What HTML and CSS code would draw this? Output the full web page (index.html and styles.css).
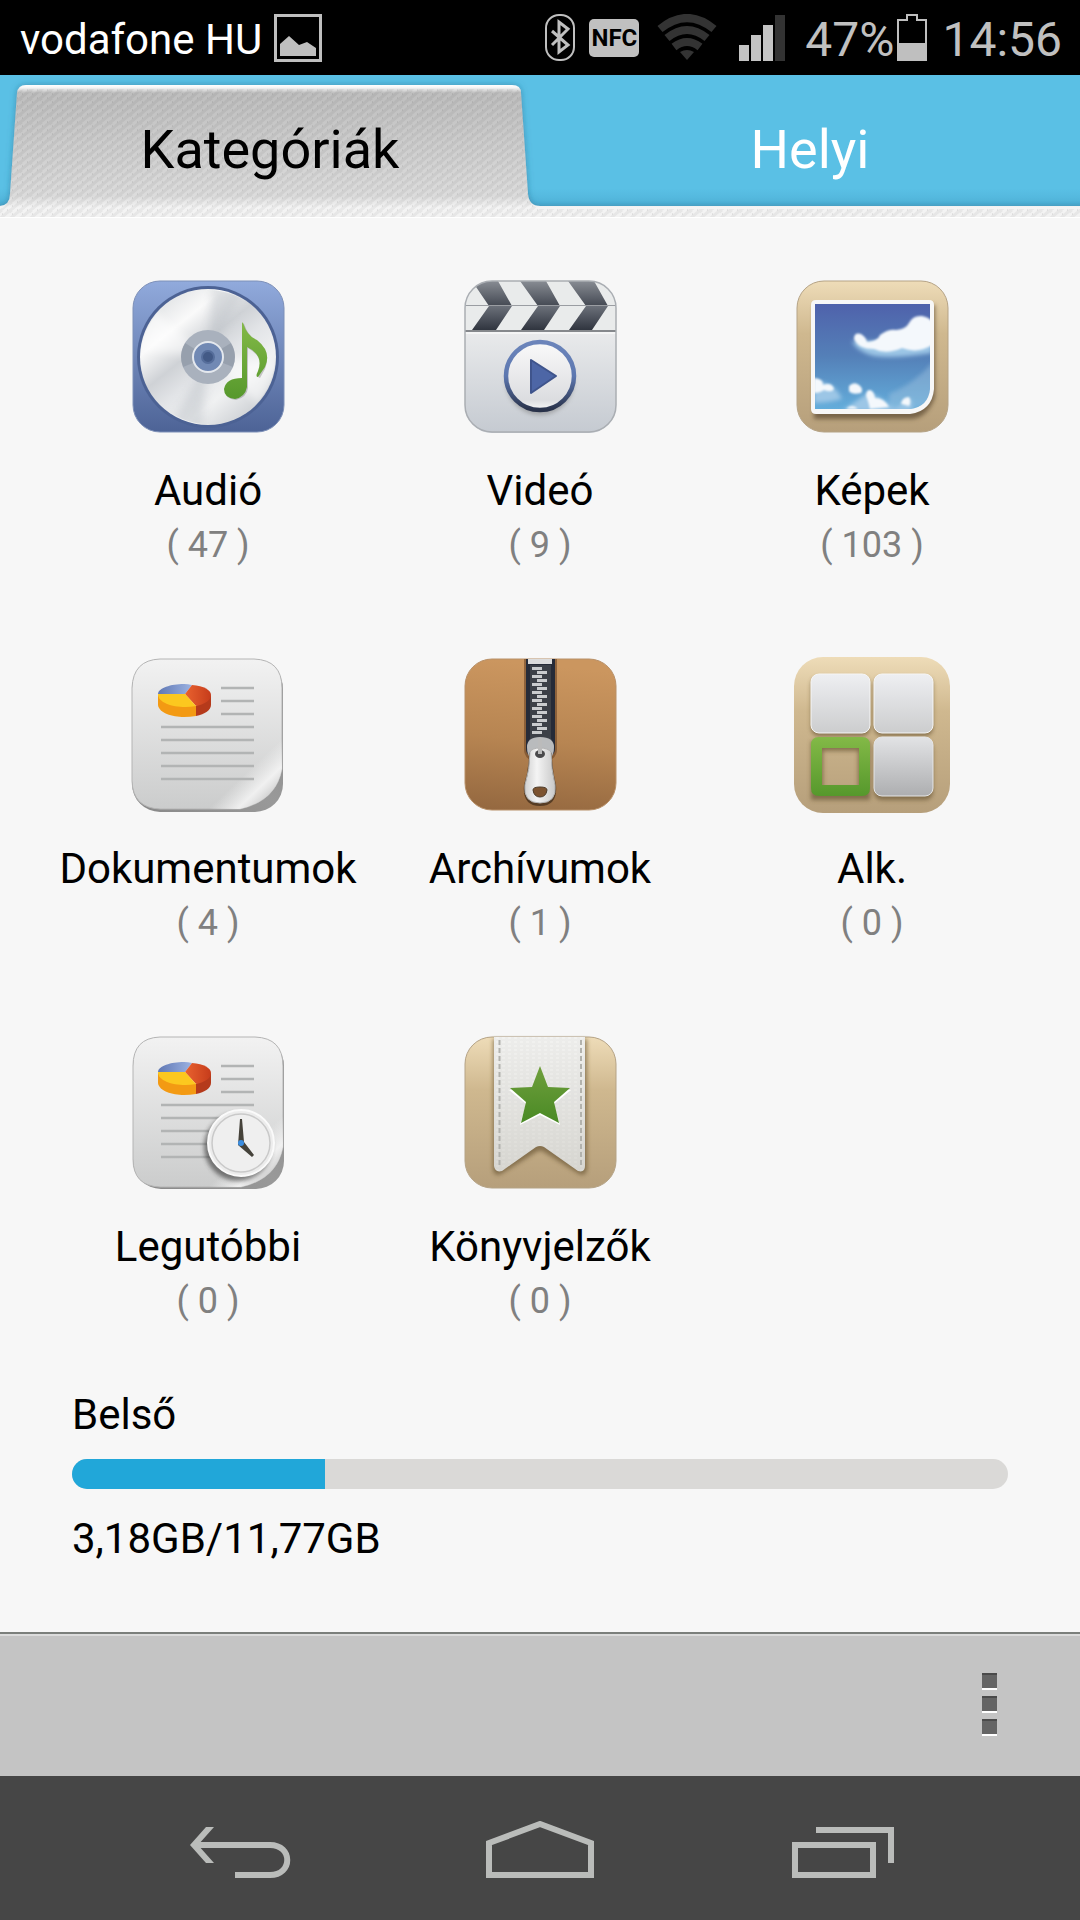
FILE: index.html
```
<!DOCTYPE html>
<html lang="hu">
<head>
    <meta charset="UTF-8">
    <meta name="viewport" content="width=device-width, initial-scale=1.0">
    <title>Kategóriák</title>
    <link rel="stylesheet" href="styles.css">
</head>
<body>
    <header class="status-bar">
        <span class="carrier">vodafone HU</span>
        <svg class="picture-icon" width="48" height="48" viewBox="0 0 48 48">
            <rect x="1.5" y="1.5" width="45" height="45" fill="none" stroke="#bfbfbf" stroke-width="3"/>
            <path d="M6 42V30L15 22 25 31 33 28 42 34V42Z" fill="#bfbfbf"/>
        </svg>
        <div class="status-icons">
            <svg width="30" height="48" viewBox="0 0 30 48">
                <rect x="1" y="1" width="28" height="45" rx="13" fill="none" stroke="#bfbfbf" stroke-width="2"/>
                <path d="M7 17L23 31 14 38V8L23 15 7 31" fill="none" stroke="#bfbfbf" stroke-width="3"/>
            </svg>
            <span class="nfc">NFC</span>
            <svg class="wifi" width="60" height="48" viewBox="0 0 60 48">
                <g fill="none" stroke="#333" stroke-width="8">
                    <path d="M3 15Q30-7 57 15"/>
                    <path d="M10 24Q30 8 50 24"/>
                    <path d="M17 33Q30 23 43 33"/>
                </g>
                <path d="M23 38Q30 34 37 38L30 46Z" fill="#333"/>
            </svg>
            <svg class="signal" width="46" height="48" viewBox="0 0 46 48">
                <path d="M0 31h10v16H0zM12 21h10v26H12zM24 11h10v36H24z" fill="#c4c4c4"/>
                <path d="M36 1h10v46H36z" fill="#333"/>
            </svg>
            <span class="percent">47%</span>
            <svg width="30" height="48" viewBox="0 0 30 48">
                <path d="M1 46V6H10V1H20V6H29V46Z" fill="none" stroke="#bfbfbf" stroke-width="2"/>
                <path d="M0 29H30V47H0Z" fill="#bfbfbf"/>
            </svg>
            <span class="clock">14:56</span>
        </div>
    </header>

    <nav class="tabs">
        <svg class="tabs-bg" viewBox="0 0 1080 142" preserveAspectRatio="none">
            <defs>
                <linearGradient id="blue" x1="0" y1="0" x2="0" y2="1">
                    <stop offset="0.8" stop-color="#5ac0e5"/>
                    <stop offset="0.92" stop-color="#4fb2d8"/>
                </linearGradient>
                <linearGradient id="tab" gradientUnits="userSpaceOnUse" x1="0" y1="10" x2="0" y2="142">
                    <stop offset="0" stop-color="#fff"/>
                    <stop offset="0.02" stop-color="#f4f4f4"/>
                    <stop offset="0.06" stop-color="#bebebe"/>
                    <stop offset="0.84" stop-color="#dcdcdc"/>
                    <stop offset="0.93" stop-color="#f4f4f4"/>
                    <stop offset="1" stop-color="#f2f2f2"/>
                </linearGradient>
                <pattern id="weave" width="10" height="8" patternUnits="userSpaceOnUse">
                    <path d="M-3 10L13-3M-3 3L3-2M7 10L13 5" stroke="#000" stroke-opacity="0.05" stroke-width="3"/>
                    <path d="M2 2h1v2h-1zM7 6h1v2h-1z" fill="#000" fill-opacity="0.07"/>
                </pattern>
                <filter id="tab-shadow" x="-5%" y="-10%" width="110%" height="120%">
                    <feDropShadow dx="0" dy="0" stdDeviation="3" flood-color="#1a5f80" flood-opacity="0.5"/>
                </filter>
            </defs>
            <rect width="1080" height="142" fill="url(#blue)"/>
            <path d="M-20 131H0Q10 130 10 119L17 18Q18 10 26 10H512Q521 10 521 18L528 119Q529 131 540 131H1100V160H-20Z" fill="url(#tab)" filter="url(#tab-shadow)"/>
            <path d="M0 134Q10 130 10 119L17 20Q18 14 26 14H512Q521 14 521 20L528 119Q529 131 540 134H1080V142H0Z" fill="url(#weave)"/>
        </svg>
        <button class="tab active">Kategóriák</button>
        <button class="tab">Helyi</button>
    </nav>

    <main>
        <div class="categories">
            <a href="#" class="category">
                <svg class="icon" viewBox="0 0 156 156">
                    <defs>
                        <linearGradient id="audio-bg" x1="0" y1="0" x2="0" y2="1">
                            <stop offset="0" stop-color="#91aadc"/>
                            <stop offset="1" stop-color="#4d6396"/>
                        </linearGradient>
                        <linearGradient id="disc" x1="0.1" y1="0" x2="0.9" y2="1">
                            <stop offset="0" stop-color="#d6d9dc"/>
                            <stop offset="0.25" stop-color="#fafafa"/>
                            <stop offset="0.42" stop-color="#cfd2d6"/>
                            <stop offset="0.55" stop-color="#e2e4e7"/>
                            <stop offset="0.72" stop-color="#f0f1f2"/>
                            <stop offset="1" stop-color="#bfc3c8"/>
                        </linearGradient>
                        <linearGradient id="green" x1="0" y1="0" x2="0" y2="1">
                            <stop offset="0" stop-color="#83b947"/>
                            <stop offset="1" stop-color="#56982c"/>
                        </linearGradient>
                        <filter id="soft"><feGaussianBlur stdDeviation="2"/></filter>
                        <filter id="sheen" x="-20%" y="-20%" width="140%" height="140%"><feGaussianBlur stdDeviation="4"/></filter>
                        <clipPath id="disc-clip"><circle cx="78" cy="78" r="67"/></clipPath>
                    </defs>
                    <rect x="3" y="2" width="151" height="151" rx="27" fill="url(#audio-bg)" stroke="#7d90b8"/>
                    <circle cx="78" cy="78" r="71" fill="#4c6294"/>
                    <circle cx="78" cy="78" r="68" fill="url(#disc)"/>
                    <g clip-path="url(#disc-clip)">
                        <path d="M78 78L5 70 20 28ZM78 78L150 82 130 126Z" fill="#fff" opacity="0.5" filter="url(#sheen)"/>
                        <path d="M78 78L82 5 114 12ZM78 78L72 150 42 144Z" fill="#b4b9c0" opacity="0.4" filter="url(#sheen)"/>
                    </g>
                    <circle cx="78" cy="78" r="27" fill="#a9b1bd"/>
                    <path d="M78 78L55 64A27 27 0 0 0 53 88ZM78 78L101 64A27 27 0 0 1 103 88Z" fill="#7e8896" opacity="0.4"/>
                    <circle cx="78" cy="78" r="15" fill="#7189b4" stroke="#e4e8ee" stroke-width="2"/>
                    <circle cx="78" cy="78" r="6" fill="#435a86" stroke="#566e9b" stroke-width="2"/>
                    <path d="M114 45Q119 59 129 64Q141 75 135 90L130 99Q127 99 129 94Q136 80 118 69V109Q117 118 106 121Q94 120 95 110Q97 100 112 101V46Q112 43 114 45Z" fill="#333" opacity="0.25"/>
                    <path d="M113 44Q117 57 127 61Q142 73 135 88L128 98Q125 98 128 92Q134 76 117 68V108Q115 118 105 120Q94 119 94 110Q96 99 112 99V46Q112 42 113 44Z" fill="url(#green)"/>
                </svg>
                <span class="label">Audió</span>
                <span class="count">( 47 )</span>
            </a>
            <a href="#" class="category">
                <svg class="icon" viewBox="0 0 156 156">
                    <defs>
                        <linearGradient id="video-bg" x1="0" y1="0" x2="0" y2="1">
                            <stop offset="0.3" stop-color="#ebeced"/>
                            <stop offset="1" stop-color="#c5cad1"/>
                        </linearGradient>
                        <linearGradient id="stripe-a" x1="0" y1="0" x2="0" y2="1">
                            <stop offset="0" stop-color="#888c93"/>
                            <stop offset="1" stop-color="#444953"/>
                        </linearGradient>
                        <linearGradient id="stripe-b" x1="0" y1="0" x2="0" y2="1">
                            <stop offset="0" stop-color="#6c717a"/>
                            <stop offset="1" stop-color="#30353f"/>
                        </linearGradient>
                        <linearGradient id="play-ring" x1="0" y1="0" x2="0" y2="1">
                            <stop offset="0" stop-color="#6c85bb"/>
                            <stop offset="0.5" stop-color="#5c77b0"/>
                            <stop offset="1" stop-color="#29324a"/>
                        </linearGradient>
                        <linearGradient id="play-face" x1="0" y1="0" x2="0" y2="1">
                            <stop offset="0" stop-color="#fafafa"/>
                            <stop offset="0.85" stop-color="#dcdde0"/>
                            <stop offset="1" stop-color="#f8f8f8"/>
                        </linearGradient>
                        <clipPath id="video-clip"><rect x="3" y="2" width="151" height="151" rx="27"/></clipPath>
                    </defs>
                    <rect x="3" y="2" width="151" height="152" rx="27" fill="url(#video-bg)"/>
                    <g clip-path="url(#video-clip)">
                        <path d="M3 2H154V51H3Z" fill="#e9ebeb"/>
                        <path d="M10 2H36L50 27H27ZM58 2H84L98 27H76ZM106 2H132L146 27H124Z" fill="url(#stripe-a)"/>
                        <path d="M27 27H50L34 51H10ZM76 27H98L82 51H59ZM124 27H146L130 51H107Z" fill="url(#stripe-b)"/>
                        <path d="M3 26.500H154" stroke="#9a9da2" stroke-width="1"/>
                        <path d="M3 52H154" stroke="#85888c" stroke-width="2"/>
                        <path d="M3 54H154" stroke="#fff" stroke-width="1"/>
                    </g>
                    <rect x="3" y="2" width="151" height="151" rx="27" fill="none" stroke="#aaaeb3" stroke-width="1.500"/>
                    <circle cx="78" cy="102" r="34" fill="#777" opacity="0.5" filter="url(#soft)"/>
                    <circle cx="78" cy="97" r="34" fill="url(#play-face)" stroke="url(#play-ring)" stroke-width="4.500"/>
                    <path d="M69 81L94 97 69 114Z" fill="#4d66a6" stroke="#3f548c" stroke-width="2" stroke-linejoin="round"/>
                </svg>
                <span class="label">Videó</span>
                <span class="count">( 9 )</span>
            </a>
            <a href="#" class="category">
                <svg class="icon" viewBox="0 0 156 156">
                    <defs>
                        <linearGradient id="wood" x1="0" y1="0" x2="0" y2="1">
                            <stop offset="0" stop-color="#eedcb8"/>
                            <stop offset="0.35" stop-color="#cfb88f"/>
                            <stop offset="1" stop-color="#b69f7b"/>
                        </linearGradient>
                        <linearGradient id="sky" x1="0" y1="0" x2="0" y2="1">
                            <stop offset="0" stop-color="#4f62ab"/>
                            <stop offset="0.5" stop-color="#5480b8"/>
                            <stop offset="1" stop-color="#63addb"/>
                        </linearGradient>
                        <clipPath id="photo-clip"><path d="M21 25H136V110Q134 128 116 130H21Z"/></clipPath>
                        <filter id="cloud" x="-20%" y="-20%" width="140%" height="140%"><feGaussianBlur stdDeviation="2"/></filter>
                        <filter id="puff" x="-20%" y="-20%" width="140%" height="140%"><feGaussianBlur stdDeviation="1"/></filter>
                    </defs>
                    <rect x="3" y="2" width="151" height="151" rx="27" fill="url(#wood)" stroke="#b5a386"/>
                    <path d="M20 26H141V118Q134 138 118 140H20Z" fill="#5b4a30" opacity="0.7" filter="url(#soft)"/>
                    <path d="M22 21H135Q140 21 140 26V110Q138 132 116 135H22Q17 135 17 130V26Q17 21 22 21Z" fill="#f7f7f7"/>
                    <path d="M21 25H136V110Q134 128 116 130H21Z" fill="url(#sky)"/>
                    <g clip-path="url(#photo-clip)">
                        <path d="M95 115Q120 105 140 82V125L95 135Z" fill="#a9c7e2" opacity="0.4" filter="url(#soft)"/>
                        <g fill="#9cc6e6" filter="url(#cloud)">
                            <path d="M58 62Q62 72 80 77Q100 80 138 74V62H60Z"/>
                            <path d="M20 103Q40 102 48 120Q34 124 20 124Z"/>
                            <path d="M48 132Q62 122 74 114Q92 120 100 130L118 120 118 132Z"/>
                        </g>
                        <g fill="#f4f8fc" filter="url(#puff)">
                            <path d="M60 60Q60 53 67 55Q72 58 73 63Q84 62 86 56Q94 50 102 51Q112 50 115 44Q119 36 128 37Q134 38 138 42V66Q124 75 108 69Q92 76 80 70Q64 70 60 60Z"/>
                            <path d="M20 99Q30 100 29 106Q38 103 40 110Q38 114 30 111Q26 114 20 114Z"/>
                            <path d="M55 107Q60 102 65 106Q70 110 67 114Q58 116 55 112Z"/>
                            <path d="M75 111Q80 111 81 119Q90 119 95 128L76 130Q74 121 72 117Q72 112 75 111Z"/>
                            <path d="M107 125Q108 118 115 118Q118 122 115 127ZM52 130Q58 124 64 130Z"/>
                        </g>
                    </g>
                </svg>
                <span class="label">Képek</span>
                <span class="count">( 103 )</span>
            </a>

            <a href="#" class="category">
                <svg class="icon" viewBox="0 0 156 156">
                    <defs>
                        <linearGradient id="paper" x1="0" y1="0" x2="0" y2="1">
                            <stop offset="0" stop-color="#f2f2f2"/>
                            <stop offset="1" stop-color="#cbcccc"/>
                        </linearGradient>
                        <linearGradient id="curl" gradientUnits="userSpaceOnUse" x1="118" y1="114" x2="141" y2="138">
                            <stop offset="0" stop-color="#f4f4f4" stop-opacity="0"/>
                            <stop offset="0.6" stop-color="#f8f8f8" stop-opacity="0.8"/>
                            <stop offset="1" stop-color="#d0d0d0"/>
                        </linearGradient>
                        <linearGradient id="under" x1="0" y1="1" x2="1" y2="0">
                            <stop offset="0" stop-color="#888"/>
                            <stop offset="0.5" stop-color="#999"/>
                            <stop offset="1" stop-color="#888"/>
                        </linearGradient>
                        <linearGradient id="pie-blue"><stop offset="0" stop-color="#6078b4"/><stop offset="1" stop-color="#9bb2e2"/></linearGradient>
                        <linearGradient id="pie-red"><stop offset="0" stop-color="#e9622f"/><stop offset="1" stop-color="#c63c1b"/></linearGradient>
                        <g id="report">
                            <path d="M28 38V48C29 56 42 60 54 60Q60 60 66 59V49Z" fill="#f39a13"/>
                            <path d="M66 49V59C75 57 81 53 81 48V38Z" fill="#b53a1b"/>
                            <path d="M55 37H28C28 31 41 27 54 27Q58 27 62 28Z" fill="url(#pie-blue)"/>
                            <path d="M55 37L62 28C74 29 81 33 81 38C81 43 75 47 66 49Z" fill="url(#pie-red)"/>
                            <path d="M55 37L66 49C50 52 28 48 28 37Z" fill="#fcc81f"/>
                            <path d="M91 31H124M91 44H124M91 57H124M31 70H124M31 83H124M31 96H124M31 109H124M31 122H124" stroke="#b2b4b4" stroke-width="2.500"/>
                        </g>
                    </defs>
                    <rect x="2" y="4" width="151" height="151" rx="28" fill="url(#under)"/>
                    <path d="M30 2H124Q152 3 152 31V112Q146 144 110 152H30Q3 151 2 124V31Q3 3 30 2Z" fill="url(#paper)" stroke="#b4b4b4"/>
                    <path d="M152 80V112Q146 144 110 152H80V80Z" fill="url(#curl)"/>
                    <use href="#report"/>
                </svg>
                <span class="label">Dokumentumok</span>
                <span class="count">( 4 )</span>
            </a>
            <a href="#" class="category">
                <svg class="icon" viewBox="0 0 156 156">
                    <defs>
                        <linearGradient id="leather" x1="0.100" y1="0" x2="0" y2="1">
                            <stop offset="0" stop-color="#cb965f"/>
                            <stop offset="0.5" stop-color="#b78552"/>
                            <stop offset="1" stop-color="#93673f"/>
                        </linearGradient>
                        <linearGradient id="metal">
                            <stop offset="0" stop-color="#d0d0d0"/>
                            <stop offset="0.4" stop-color="#f4f4f4"/>
                            <stop offset="1" stop-color="#c8c8c8"/>
                        </linearGradient>
                        <pattern id="teeth" x="70" y="10" width="16" height="8" patternUnits="userSpaceOnUse">
                            <path d="M0 0h10v3h-10zM5 4h10v3h-10z" fill="#c9cbcd"/>
                        </pattern>
                    </defs>
                    <rect x="3" y="2" width="151" height="151" rx="27" fill="url(#leather)" stroke="#b89068"/>
                    <path d="M62 2H95V92Q95 104 78 106Q62 104 62 92Z" fill="#6b4527" opacity="0.6"/>
                    <path d="M64 2H93V92Q93 100 78 102Q64 100 64 92Z" fill="#262b38"/>
                    <path d="M68 8H89V82H68Z" fill="#3c4047"/>
                    <path d="M66 2H90V7H66Z" fill="#dcdcdc"/>
                    <path d="M70 10H86V78H70Z" fill="url(#teeth)"/>
                    <path d="M65 90Q65 80 78 80Q92 80 92 90Q92 98 88 102H69Q65 98 65 90Z" fill="#b9bbbd"/>
                    <path d="M67 96Q78 88 90 96Q90 112 94 128Q96 149 78 149Q60 149 62 128Q67 112 67 96Z" fill="#3a2817" opacity="0.7"/>
                    <path d="M68 95Q70 91 78 91Q86 91 89 95Q89 112 93 128Q95 146 78 146Q61 146 63 128Q68 112 68 95Z" fill="url(#metal)" stroke="#b4b4b4"/>
                    <ellipse cx="78" cy="97" rx="5" ry="4" fill="#4a4a4c"/>
                    <path d="M78 81V97" stroke="#bbb" stroke-width="4"/>
                    <path d="M71 133Q71 130 78 130Q85 130 85 133Q84 140 78 140Q72 140 71 133Z" fill="#7c5330" stroke="#4c3a28" stroke-width="1"/>
                </svg>
                <span class="label">Archívumok</span>
                <span class="count">( 1 )</span>
            </a>
            <a href="#" class="category">
                <svg class="icon" viewBox="0 0 156 156">
                    <defs>
                        <linearGradient id="tile" x1="0" y1="0" x2="0" y2="1">
                            <stop offset="0" stop-color="#eeeff2"/>
                            <stop offset="1" stop-color="#cccdce"/>
                        </linearGradient>
                        <linearGradient id="tile-dark" x1="0" y1="0" x2="0" y2="1">
                            <stop offset="0" stop-color="#e2e3e5"/>
                            <stop offset="1" stop-color="#adaeb0"/>
                        </linearGradient>
                    </defs>
                    <rect x="0" y="0" width="156" height="156" rx="29" fill="url(#wood)"/>
                    <g fill="#6b5636" opacity="0.7" filter="url(#soft)">
                        <rect x="17" y="20" width="59" height="59" rx="8"/>
                        <rect x="80" y="20" width="59" height="59" rx="8"/>
                        <path d="M17 84H76V143H17ZM29 94V132H64V94Z" fill-rule="evenodd"/>
                        <rect x="80" y="84" width="59" height="59" rx="8"/>
                    </g>
                    <rect x="17" y="17" width="59" height="59" rx="8" fill="url(#tile)" stroke="#f6f6f6"/>
                    <rect x="80" y="17" width="59" height="59" rx="8" fill="url(#tile)" stroke="#f6f6f6"/>
                    <rect x="80" y="80" width="59" height="59" rx="8" fill="url(#tile-dark)" stroke="#e6e6e6"/>
                    <path d="M25 80H68Q76 80 76 88V131Q76 139 68 139H25Q17 139 17 131V88Q17 80 25 80ZM28 91V128H65V91Z" fill="url(#green)" fill-rule="evenodd"/>
                </svg>
                <span class="label">Alk.</span>
                <span class="count">( 0 )</span>
            </a>

            <a href="#" class="category">
                <svg class="icon" viewBox="0 0 156 156">
                    <rect x="3" y="3" width="151" height="151" rx="28" fill="url(#under)"/>
                    <path d="M30 2H125Q153 3 153 31V112Q147 144 111 152H30Q3 151 3 124V31Q3 3 30 2Z" fill="url(#paper)" stroke="#b4b4b4"/>
                    <path d="M153 80V112Q147 144 111 152H80V80Z" fill="url(#curl)"/>
                    <use href="#report"/>
                    <circle cx="108" cy="112" r="34" fill="#333" opacity="0.6" filter="url(#soft)"/>
                    <circle cx="111" cy="108" r="33" fill="#ececec" stroke="#fafafa" stroke-width="2"/>
                    <circle cx="111" cy="108" r="29" fill="#efefef" stroke="#c9c9c9" stroke-width="1.500"/>
                    <path d="M110 84H112L114 107L124 120 122 122 108 110Z" fill="#45423a"/>
                    <circle cx="111" cy="108" r="3" fill="#3b8de0"/>
                </svg>
                <span class="label">Legutóbbi</span>
                <span class="count">( 0 )</span>
            </a>
            <a href="#" class="category">
                <svg class="icon" viewBox="0 0 156 156">
                    <defs>
                        <linearGradient id="ribbon" x1="0" y1="0" x2="0" y2="1">
                            <stop offset="0" stop-color="#f2f2f0"/>
                            <stop offset="1" stop-color="#dad9d4"/>
                        </linearGradient>
                        <pattern id="linen" width="6" height="4" patternUnits="userSpaceOnUse">
                            <path d="M0 1H6M1 3H4" stroke="#000" stroke-opacity="0.04"/>
                        </pattern>
                        <linearGradient id="star" x1="0" y1="0" x2="0" y2="1">
                            <stop offset="0" stop-color="#6f9f3c"/>
                            <stop offset="1" stop-color="#4a8a25"/>
                        </linearGradient>
                    </defs>
                    <rect x="3" y="2" width="151" height="151" rx="27" fill="url(#wood)" stroke="#b5a386"/>
                    <path d="M31 4H125V134Q124 142 117 139L80 116H76L39 139Q32 142 31 134Z" fill="#5f4c2c" opacity="0.6" filter="url(#soft)"/>
                    <path d="M32 2H123V131Q123 138 116 136L82 112Q78 110 74 112L40 136Q33 138 32 131Z" fill="url(#ribbon)"/>
                    <path d="M32 2H123V131Q123 138 116 136L82 112Q78 110 74 112L40 136Q33 138 32 131Z" fill="url(#linen)"/>
                    <path d="M37.500 5V130M119 5V130" stroke="#b2b2ad" stroke-width="2" stroke-dasharray="5 3"/>
                    <path d="M78 33L86 54 109 55 92 69 98 90 78 80 58 90 64 69 47 55 70 54Z" fill="#fff"/>
                    <path d="M78 31L86 52 108 53 92 67 97 88 78 78 59 88 64 67 48 53 70 52Z" fill="url(#star)"/>
                </svg>
                <span class="label">Könyvjelzők</span>
                <span class="count">( 0 )</span>
            </a>
        </div>

        <section class="storage">
            <label for="internal">Belső</label>
            <progress id="internal" value="3.18" max="11.77"></progress>
            <span>3,18GB/11,77GB</span>
        </section>
    </main>

    <div class="toolbar">
        <button class="menu" aria-label="Menü"><i></i><i></i><i></i></button>
    </div>

    <footer class="nav-bar">
        <button aria-label="Vissza">
            <svg width="110" height="60" viewBox="0 0 110 60">
                <path d="M30 6H22L6 24 22 42H30L14 24Z" fill="#babcba"/>
                <path d="M14 24H86C109 24 109 54 86 54H51" fill="none" stroke="#babcba" stroke-width="6"/>
            </svg>
        </button>
        <button aria-label="Kezdőlap">
            <svg width="110" height="60" viewBox="0 0 110 60">
                <path d="M4 54V22L55 3 106 22V54Z" fill="none" stroke="#babcba" stroke-width="6"/>
            </svg>
        </button>
        <button aria-label="Legutóbbi alkalmazások">
            <svg width="110" height="60" viewBox="0 0 110 60">
                <path d="M9 24H87V54H9ZM30 9H105V42" fill="none" stroke="#babcba" stroke-width="6"/>
            </svg>
        </button>
    </footer>
</body>
</html>
```

FILE: styles.css
```
* {
    box-sizing: border-box;
}
body {
    margin: 0;
    min-height: 100vh;
    display: flex;
    flex-direction: column;
    font-family: Roboto, sans-serif;
    font-size: 42px;
    line-height: 50px;
    color: #000;
    background-color: #f7f7f7;
}
button {
    border: 0;
    padding: 0;
    background: none;
    font: inherit;
    color: inherit;
}
svg {
    display: block;
}

/* Status bar */
.status-bar {
    display: flex;
    align-items: center;
    height: 75px;
    padding: 0 18px 0 20px;
    background-color: #000;
    color: #fff;
}
.carrier {
    margin-right: 12px;
    padding-top: 4px;
}
.status-icons {
    display: flex;
    align-items: center;
    margin-left: auto;
    color: #c0c0c0;
    font-size: 48px;
}
.nfc {
    width: 50px;
    height: 38px;
    margin: 0 18px 0 14px;
    border-radius: 5px;
    background-color: #c0c0c0;
    color: #000;
    font-size: 24px;
    font-weight: bold;
    line-height: 38px;
    text-align: center;
}
.signal {
    margin: 0 20px 0 22px;
}
.percent {
    margin-right: 3px;
    padding-top: 4px;
}
.clock {
    margin-left: 15px;
    padding-top: 4px;
}

/* Tabs */
.tabs {
    position: relative;
    display: flex;
    height: 143px;
    border-bottom: 1px solid #fff;
}
.tabs-bg {
    position: absolute;
    top: 0;
    left: 0;
    width: 100%;
    height: 100%;
}
.tab {
    position: relative;
    flex: 1;
    padding-top: 8px;
    font-size: 54px;
    color: #fff;
}
.tab.active {
    color: #000;
}

/* Categories */
main {
    flex: 1;
    padding: 61px 42px 0;
}
.categories {
    display: grid;
    grid-template-columns: repeat(3, 1fr);
    row-gap: 84px;
}
.category {
    display: flex;
    flex-direction: column;
    align-items: center;
    color: #000;
    text-decoration: none;
}
.icon {
    width: 156px;
    height: 156px;
    margin-bottom: 31px;
}
.count {
    padding-top: 1px;
    font-size: 36px;
    line-height: 56px;
    color: #808080;
}

/* Storage */
.storage {
    display: flex;
    flex-direction: column;
    padding: 61px 30px 68px;
}
progress {
    appearance: none;
    width: 100%;
    height: 30px;
    margin: 19px 0 25px;
    border: 0;
    border-radius: 15px;
    overflow: hidden;
}
progress::-webkit-progress-bar {
    background-color: #dad9d7;
}
progress::-webkit-progress-value {
    background-color: #21a7d9;
}

/* Bottom bars */
.toolbar {
    display: flex;
    justify-content: flex-end;
    align-items: center;
    height: 144px;
    padding: 0 83px 4px 0;
    border-top: 2px solid #7b7f7b;
    box-shadow: inset 0 2px #dcdcdc;
    background-color: #c4c4c4;
}
.menu {
    display: flex;
    flex-direction: column;
    gap: 8px;
}
.menu i {
    width: 15px;
    height: 15px;
    border-top: 2px solid #4a4a4a;
    background-color: #646464;
    box-shadow: 0 2px #fff;
}
.nav-bar {
    display: flex;
    justify-content: center;
    gap: 191px;
    height: 144px;
    padding-top: 6px;
    background-color: #464646;
}
```
